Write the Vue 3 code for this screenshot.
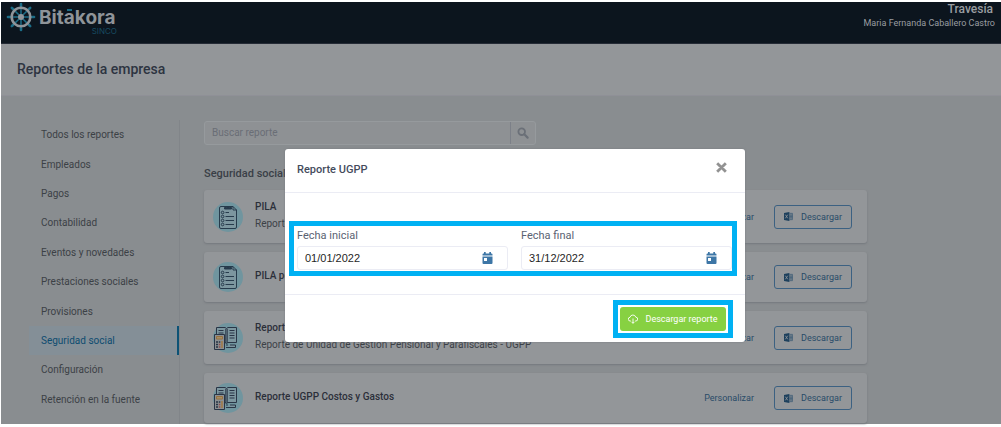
<script setup>
import { ref } from 'vue'

const categories = [
  'Todos los reportes', 'Empleados', 'Pagos', 'Contabilidad', 'Eventos y novedades',
  'Prestaciones sociales', 'Provisiones', 'Seguridad social', 'Configuración', 'Retención en la fuente',
]
const active = ref('Seguridad social')
const search = ref('')
const startDate = ref('01/01/2022')
const endDate = ref('31/12/2022')

const reports = [
  { title: 'PILA', detail: 'Reporte', icon: 'list' },
  { title: 'PILA por', detail: '', icon: 'list' },
  { title: 'Reporte UGPP', detail: 'Reporte de Unidad de Gestión Pensional y Parafiscales - UGPP', icon: 'ledger' },
  { title: 'Reporte UGPP Costos y Gastos', detail: '', icon: 'ledger' },
]
const spokes = [0, 45, 90, 135, 180, 225, 270, 315]
</script>

<template>
  <div class="page">
    <header class="topbar">
      <a class="brand" href="#" aria-label="Bitákora Sinco">
        <svg class="wheel" viewBox="0 0 30 30" aria-hidden="true">
          <g v-for="angle in spokes" :key="angle" :transform="`rotate(${angle} 15 15)`">
            <path d="M15 4V2" stroke="#1b6d87" stroke-width="2.6" stroke-linecap="round" />
            <path d="M15 13V6" stroke="#1b6d87" stroke-width="1.5" />
          </g>
          <circle cx="15" cy="15" r="9.3" fill="none" stroke="#8f9499" stroke-width="2.6" />
          <circle cx="15" cy="15" r="3" fill="#8f9499" />
        </svg>
        <span class="wordmark">
          <span class="name">Bit<span class="accent">a</span>kora</span>
          <span class="maker">SINCO</span>
        </span>
      </a>
      <div class="account">
        <strong>Travesía</strong>
        <span>Maria Fernanda Caballero Castro</span>
      </div>
    </header>

    <div class="heading"><h1>Reportes de la empresa</h1></div>

    <div class="content">
      <nav class="sidebar" aria-label="Categorías">
        <div class="links">
          <a v-for="item in categories" :key="item" href="#" :class="{ active: item === active }" @click.prevent="active = item">{{ item }}</a>
        </div>
      </nav>

      <main class="main">
        <form class="search" @submit.prevent>
          <input v-model="search" type="text" placeholder="Buscar reporte" aria-label="Buscar reporte">
          <button type="submit" aria-label="Buscar">
            <svg viewBox="0 0 12 12"><circle cx="4.7" cy="4.7" r="3.3" fill="none" stroke="#6b7078" stroke-width="1.8" /><path d="M7.3 7.3L10.6 10.6" stroke="#6b7078" stroke-width="2.2" stroke-linecap="round" /></svg>
          </button>
        </form>
        <h2>Seguridad social</h2>
        <section class="cards">
          <article v-for="report in reports" :key="report.title" class="card" :class="{ detailed: report.detail }">
            <svg v-if="report.icon === 'list'" class="picture" viewBox="0 0 30 30" aria-hidden="true">
              <circle cx="15" cy="15" r="15" fill="#70959f" />
              <g fill="none" stroke="#273b4c" stroke-width="1">
                <path d="M11 4.500H8Q6.500 4.500 6.500 6V25Q6.500 26.500 8 26.500H22Q23.500 26.500 23.500 25V8L20 4.500H19Z" fill="#7c969f" />
                <path d="M11.500 7V5.500H13.500Q15 2.800 16.500 5.500H18.500V7Z" fill="#273b4c" />
                <path d="M20 4.500V8H23.500" />
                <path d="M12.500 10.500H16M12.500 14.500H21M12.500 18.500H21M12.500 22.500H21" />
                <circle cx="9.600" cy="10.500" r="1.300" /><circle cx="9.600" cy="14.500" r="1.300" /><circle cx="9.600" cy="18.500" r="1.300" /><circle cx="9.600" cy="22.500" r="1.300" />
              </g>
            </svg>
            <svg v-else class="picture" viewBox="0 0 30 30" aria-hidden="true">
              <circle cx="15" cy="15" r="15" fill="#70959f" />
              <g fill="#7c969f" stroke="#293546" stroke-width="1">
                <path d="M3.500 12V4.500H12L13.500 5.500L15 4.500H23.500V19.500H15L13.500 20.500L12 19.500" />
                <path d="M12.800 6V20M14.200 6V20M5.500 7.500H10.500M5.500 10H10.500M16.500 7.500H21.500M16.500 10H21.500M16.500 12.500H21.500M16.500 15H21.500" />
                <path d="M1.500 11.500H11.500V26.500H1.500Z" fill="#8b8f92" />
                <path d="M3.500 13.500H9.500V16H3.500Z" fill="#a48e66" stroke="#96703f" />
                <path d="M13 24.500H22.500V22H17M13 22H15" />
              </g>
              <path d="M3 19H5M3 21.500H5M3 24H5M5.800 19H7.300" stroke="#293546" stroke-width="1.500" />
              <path d="M5.800 21.500H7.300M5.800 24H7.300" stroke="#8e4c4c" stroke-width="1.500" /><path d="M9 18V25" stroke="#a27945" stroke-width="1.500" />
            </svg>
            <div class="info"><h3>{{ report.title }}</h3><p v-if="report.detail">{{ report.detail }}</p></div>
            <a class="customize" href="#">Personalizar</a>
            <button class="download" type="button">
              <svg viewBox="0 0 10 10" aria-hidden="true"><path d="M0 1L6 0V10L0 9Z" fill="#1d405d" /><path d="M1.500 3L4.200 7M4.200 3L1.500 7" stroke="#939699" stroke-width=".9" /><path d="M6 1.500H9.500V8.500H6M6 3.500H9.500M6 5H9.500M6 6.500H9.500M7.800 1.500V8.500" fill="none" stroke="#365873" stroke-width=".7" /></svg>
              Descargar
            </button>
          </article>
        </section>
      </main>
    </div>

    <div class="layer">
      <section class="dialog" role="dialog" aria-modal="true" aria-labelledby="dialog-title">
        <div class="dialog-head">
          <h2 id="dialog-title">Reporte UGPP</h2>
          <button type="button" aria-label="Cerrar"><svg viewBox="0 0 12 12"><path d="M2 2L10 10M10 2L2 10" stroke="#929292" stroke-width="2.600" /></svg></button>
        </div>
        <div class="dialog-body">
          <div class="fields">
            <div class="field">
              <label for="start">Fecha inicial</label>
              <div class="datebox">
                <input id="start" v-model="startDate" type="text">
                <button type="button" aria-label="Abrir calendario inicial"><svg viewBox="0 0 10 12"><path d="M0 4.500H10V11Q10 12 9 12H1Q0 12 0 11ZM0 3.500V2.500Q0 1.500 1 1.500H1.500V0H3.200V1.500H6.800V0H8.500V1.500H9Q10 1.500 10 2.500V3.500Z" fill="#3d76a6" /><path d="M1.500 6H4.500V9H1.500Z" fill="#fff" /></svg></button>
              </div>
            </div>
            <div class="field">
              <label for="end">Fecha final</label>
              <div class="datebox">
                <input id="end" v-model="endDate" type="text">
                <button type="button" aria-label="Abrir calendario final"><svg viewBox="0 0 10 12"><path d="M0 4.500H10V11Q10 12 9 12H1Q0 12 0 11ZM0 3.500V2.500Q0 1.500 1 1.500H1.500V0H3.200V1.500H6.800V0H8.500V1.500H9Q10 1.500 10 2.500V3.500Z" fill="#3d76a6" /><path d="M1.500 6H4.500V9H1.500Z" fill="#fff" /></svg></button>
              </div>
            </div>
          </div>
        </div>
        <div class="dialog-foot">
          <div class="callout">
            <button type="button">
              <svg viewBox="0 0 10 10" aria-hidden="true"><path d="M3 7H2.300A1.800 1.800 0 0 1 2 3.300A3 3 0 0 1 7.800 3.200A1.900 1.900 0 0 1 7.800 7H7M5 4.500V9.300M3.500 7.800L5 9.300L6.500 7.800" fill="none" stroke="#fff" stroke-width=".9" /></svg>
              Descargar reporte
            </button>
          </div>
        </div>
      </section>
    </div>
  </div>
</template>

<style>
body { background: #fff; }
</style>

<style scoped>
* { box-sizing: border-box; }
h1, h2, h3, p { margin: 0; font-weight: 500; }
a { color: inherit; text-decoration: none; }
button { display: flex; align-items: center; justify-content: center; padding: 0; border: 0; background: none; font: inherit; color: inherit; cursor: pointer; }
input { min-width: 0; border: 0; outline: 0; background: none; padding: 0; font: inherit; color: inherit; }
svg { display: block; flex: none; }

.page { position: relative; margin: 2px 0 3px 1px; font-family: Roboto, "Liberation Sans", sans-serif; background: #898d90; color: #2d3441; }
.topbar { display: flex; justify-content: space-between; height: 42px; background: #0c151e; border-bottom: 1px solid #252b36; color: #9a9da1; }
.brand { display: flex; gap: 3px; padding-left: 5px; }
.wheel { width: 30px; height: 30px; }
.wordmark { display: flex; flex-direction: column; width: 78px; padding-top: 7px; }
.name { font: 700 19px/18px Inter, sans-serif; color: #8f9499; }
.accent { position: relative; }
.accent::after { content: ""; position: absolute; top: 3px; left: 3px; width: 5px; height: 2px; background: #1b6d87; }
.maker { align-self: flex-end; font: 8px/8px Inter, sans-serif; color: #174b61; }
.account { display: flex; flex-direction: column; align-items: flex-end; padding-right: 6px; font-size: 9px; line-height: 15px; }
.account strong { padding-right: 2px; font-size: 12px; line-height: 14px; font-weight: 500; }
.heading { display: flex; align-items: center; height: 52px; padding: 0 16px 2px; background: #939699; border-bottom: 1px solid #8f9097; }
.heading h1 { font-size: 14px; line-height: 20px; }

.content { display: flex; padding: 24px 134px 0 28px; }
.sidebar { flex: 0 0 151px; border-right: 1px solid #818589; }
.links { display: grid; grid-auto-rows: 1fr; min-height: 294px; }
.links a { display: flex; align-items: center; padding-left: 12px; font-size: 10px; color: #3c4146; }
.links .active { color: #0e4c70; background: #848f97; border-right: 2px solid #0c5275; }

.main { flex: 1; min-width: 0; padding: 1px 0 1px 24px; }
.search { display: flex; width: 50%; height: 24px; background: #8e9194; border: 1px solid #969a9d; border-radius: 3px; }
.search input { flex: 1; padding: 0 0 2px 7px; font-size: 10px; }
.search input::placeholder { color: #6a6e76; opacity: 1; }
.search button { width: 25px; border-left: 1px solid #7c8088; }
.search svg { width: 12px; height: 12px; }
.main > h2 { padding: 21px 0 8px; font-size: 11px; line-height: 16px; color: #3a3f47; }
.cards { display: flex; flex-direction: column; gap: 9px; }
.card { display: flex; align-items: center; min-height: 50px; padding: 0 15px 0 9px; background: #939699; border-radius: 3px; box-shadow: 0 1px 2px #74787d; }
.card.detailed { min-height: 53px; }
.picture { width: 30px; height: 30px; overflow: visible; }
.info { flex: 1; min-width: 0; padding: 0 0 4px 12px; color: #2b2f39; }
.info h3 { font-size: 10px; line-height: 17px; }
.info p { font-size: 10px; line-height: 17px; font-weight: 400; color: #3c4147; }
.customize, .download { font-size: 9px; color: #294b68; }
.customize { margin-right: 20px; }
.download { gap: 8px; width: 78px; height: 24px; border: 1px solid #3c6182; border-radius: 3px; }
.download svg { width: 9px; height: 9px; }

.layer { position: absolute; inset: 0; display: flex; justify-content: center; align-items: flex-start; padding: 147px 0 0 28px; }
.dialog { width: 460px; background: #fff; border-radius: 3px; box-shadow: 0 0 2px #74787d; }
.dialog-head { display: flex; align-items: center; justify-content: space-between; height: 44px; padding: 0 17px 6px 12px; border-bottom: 1px solid #ebecf4; }
.dialog-head h2 { padding-top: 4px; font-size: 11px; line-height: 18px; color: #444b5c; }
.dialog-head svg { width: 13px; height: 13px; }
.dialog-body { padding: 28px 8px 18px 4px; border-bottom: 1px solid #ebecf4; }
.fields { display: grid; grid-template-columns: 1fr 1fr; gap: 13px; height: 55px; padding: 0 0 0 3px; border: 5px solid #00b1f3; }
.field { min-width: 0; }
.field label { display: block; font-size: 11px; line-height: 20px; color: #5a6272; }
.datebox { display: flex; height: 24px; padding: 0 14px 0 7px; border: 1px solid #ebecf4; border-radius: 3px; }
.datebox input { flex: 1; font: 11px/22px "Liberation Sans", Arial, sans-serif; color: #1f1f1f; }
.datebox svg { width: 11px; height: 12px; }
.dialog-foot { display: flex; justify-content: flex-end; padding: 5px 12px 4px; }
.callout { border: 5px solid #00b1f3; padding: 2px; }
.callout button { gap: 7px; width: 106px; height: 24px; border-radius: 3px; background: #87d142; font-size: 9px; color: #fff; }
.callout svg { width: 10px; height: 10px; }
</style>
